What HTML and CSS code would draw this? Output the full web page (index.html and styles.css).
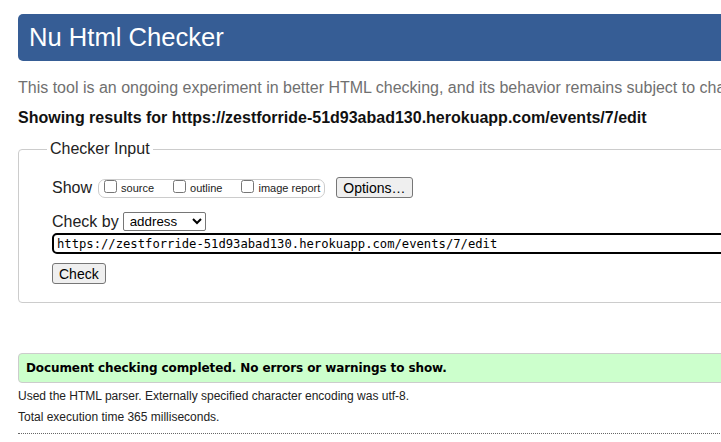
FILE: index.html
```html
<!DOCTYPE html>
<html lang="en">
<head>
<meta charset="utf-8">
<title>Nu Html Checker</title>
<link rel="stylesheet" href="styles.css">
</head>
<body>
<div class="page">
  <h1 class="header">Nu Html Checker</h1>
  <p class="intro">This tool is an ongoing experiment in better HTML checking, and its behavior remains subject to change</p>
  <p class="results-for">Showing results for https://zestforride-51d93abad130.herokuapp.com/events/7/edit</p>
  <fieldset class="checker">
    <legend>Checker Input</legend>
    <div class="row row-show">
      <span class="row-label">Show</span>
      <span class="show-box">
        <label class="opt"><input type="checkbox"><span>source</span></label>
        <label class="opt"><input type="checkbox"><span>outline</span></label>
        <label class="opt"><input type="checkbox"><span>image report</span></label>
      </span>
      <button class="btn btn-options" type="button">Options…</button>
    </div>
    <div class="row row-by">
      <span class="row-label">Check by</span>
      <select class="by-select"><option>address</option></select>
    </div>
    <div class="row row-url">
      <input class="url" type="text" value="https://zestforride-51d93abad130.herokuapp.com/events/7/edit">
    </div>
    <div class="row row-submit">
      <button class="btn" type="button">Check</button>
    </div>
  </fieldset>
  <p class="success">Document checking completed. No errors or warnings to show.</p>
  <div class="details">
    <p>Used the HTML parser. Externally specified character encoding was utf-8.</p>
    <p>Total execution time 365 milliseconds.</p>
  </div>
  <div class="rule"></div>
</div>
</body>
</html>
```

FILE: styles.css
```css
html {
  overflow: hidden;
  background: #fff;
}
body {
  margin: 0;
  font-family: "Liberation Sans", Arial, sans-serif;
  color: #222;
}
.page {
  width: 1100px;
  padding: 14px 0 0 18px;
}
.header {
  margin: 0;
  height: 47px;
  line-height: 47px;
  padding-left: 11px;
  background: #365d95;
  color: #fff;
  font-weight: normal;
  font-size: 25.6px;
  border-radius: 5px;
}
.intro {
  margin: 18px 0 12px;
  font-size: 16px;
  color: #707070;
  white-space: nowrap;
}
.results-for {
  margin: 0;
  font-size: 16px;
  font-weight: bold;
  color: #111;
  white-space: nowrap;
}
.checker {
  margin: 13px 0 0;
  padding: 19px 33px 18px 33px;
  border: 1px solid #ccc;
  border-radius: 4px;
}
.checker legend {
  margin-left: -5px;
  padding: 0 3px;
  font-size: 16px;
  color: #222;
}
.row {
  display: flex;
  align-items: flex-start;
}
.row-label {
  font-size: 16px;
  color: #222;
}
.row-show {
  height: 21px;
}
.row-show .row-label {
  line-height: 21px;
  margin-right: 6px;
}
.show-box {
  display: flex;
  align-items: flex-start;
  margin-top: 2px;
  height: 19px;
  box-sizing: border-box;
  border: 1px solid #ccc;
  border-radius: 7px;
  padding: 0 4px 0 5px;
}
.opt {
  display: flex;
  align-items: flex-start;
  margin-right: 19px;
  font-size: 11px;
  color: #222;
}
.opt:last-child {
  margin-right: 0;
}
.opt input {
  margin: 0 4px 0 0;
  width: 13px;
  height: 13px;
}
.opt span {
  line-height: 13px;
  padding-top: 2px;
}
.btn {
  height: 21px;
  box-sizing: border-box;
  padding: 1px 6px;
  font-family: "Liberation Sans", Arial, sans-serif;
  font-size: 14px;
  color: #000;
  background: #efefef;
  border: 1px solid #767676;
  border-radius: 3px;
}
.btn-options {
  margin-left: 11px;
}
.row-by {
  margin-top: 14px;
  height: 19px;
}
.row-by .row-label {
  line-height: 19px;
  margin-right: 4px;
}
.by-select {
  width: 83px;
  height: 19px;
  font-family: "Liberation Sans", Arial, sans-serif;
  font-size: 13.33px;
  color: #000;
  background: #fff;
  border: 1px solid #767676;
  border-radius: 2px;
  padding: 0 0 0 2px;
}
.row-url {
  margin-top: 2px;
}
.url {
  width: 1000px;
  height: 21px;
  box-sizing: border-box;
  border: 2px solid #000;
  border-radius: 5px;
  padding: 0 3px;
  font-family: "DejaVu Sans Mono", "Liberation Mono", monospace;
  font-size: 12.2px;
  color: #000;
  outline: none;
}
.row-submit {
  margin-top: 9px;
}
.success {
  margin: 50px 0 0;
  height: 30px;
  box-sizing: border-box;
  border: 1px solid #ccc;
  border-radius: 4px;
  background: #ccffcc;
  padding-left: 7px;
  line-height: 28px;
  font-family: "DejaVu Sans", Verdana, sans-serif;
  font-weight: bold;
  font-size: 12px;
  letter-spacing: -0.1px;
  color: #000;
}
.details {
  margin-top: 3px;
  font-size: 12px;
  line-height: 21px;
  color: #222;
}
.details p {
  margin: 0;
}
.rule {
  margin-top: 5px;
  border-top: 1px dotted #666;
}
```
